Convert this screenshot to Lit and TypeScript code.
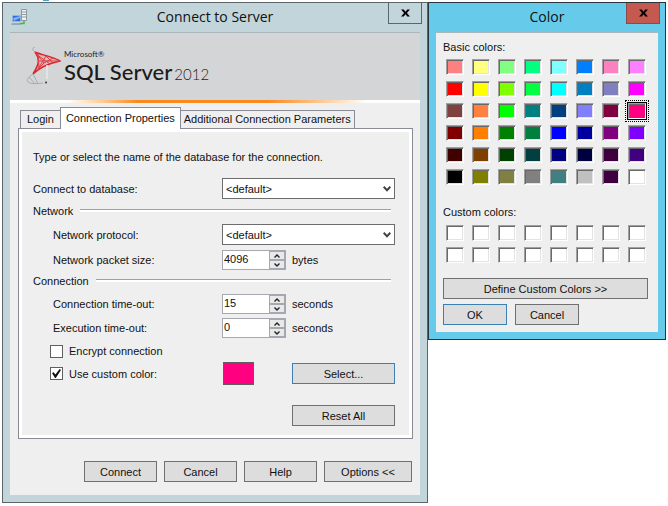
import { LitElement, html, css } from "lit";
import { customElement, property } from "lit/decorators.js";
import { classMap } from "lit/directives/class-map.js";

const controls = css`
  * { box-sizing: border-box; }
  button, input, select { font: inherit; color: inherit; margin: 0; }
  .btn {
    height: 21px;
    padding: 0;
    border: 1px solid #707070;
    border-radius: 0;
    background: #dddddd;
    text-align: center;
  }
  .btn.primary { border-color: #3c7fb1; }
`;

@customElement("dialog-window")
class DialogWindow extends LitElement {
  @property() heading = "";
  @property({ type: Boolean, reflect: true }) active = false;

  static styles = css`
    * { box-sizing: border-box; }
    :host {
      display: flex;
      flex-direction: column;
      box-sizing: border-box;
      border: 1px solid #5b6469;
      background: #c1d5db;
      padding: 0 7px 7px;
    }
    :host([active]) { border-color: #28343b; background: #66cbea; }
    .bar {
      display: grid;
      grid-template-columns: 1fr auto 1fr;
      height: 29px;
    }
    .icon { padding: 6px 0 0 1px; line-height: 0; }
    .title {
      margin: 0;
      font: 14px/28px "Open Sans", "Noto Sans", sans-serif;
      color: #111;
    }
    .close {
      justify-self: end;
      width: 34px;
      height: 21px;
      margin-right: -2px;
      padding: 0;
      border: 1px solid #5d6570;
      border-top: 0;
      background: transparent;
      line-height: 0;
    }
    :host([active]) .close { background: #c4594f; border-color: #8a4a4c; }
    .client {
      flex: 1;
      display: flex;
      flex-direction: column;
      background: #efefef;
      border-top: 1px solid #a9b6ba;
    }
  `;

  render() {
    return html`
      <header class="bar">
        <div class="icon"><slot name="icon"></slot></div>
        <h1 class="title">${this.heading}</h1>
        <button class="close" aria-label="Close">
          <svg width="9" height="8" viewBox="0 0 10 9"><path d="M0 .5h3l2 2.500 2-2.500h3L6.600 4.500 10 8.500H7L5 6 3 8.500H0l3.400-4z" fill="#000" /></svg>
        </button>
      </header>
      <div class="client"><slot></slot></div>
    `;
  }
}

@customElement("spin-box")
class SpinBox extends LitElement {
  @property() value = "";
  @property() label = "";

  static styles = [controls, css`
    :host { display: grid; grid-template-columns: 1fr 16px; width: 64px; height: 20px; box-sizing: border-box; border: 1px solid #a6a8b0; background: #fff; }
    .value { width: 100%; min-width: 0; height: 18px; padding: 0 0 2px 1px; border: 0; background: #fff; outline: 0; }
    .arrows { display: grid; grid-template-rows: 1fr 1fr; }
    .arrow { display: grid; place-items: center; padding: 0; border: 1px solid #a6a8b0; background: #e9e9ea; line-height: 0; }
  `];

  render() {
    return html`
      <input class="value" type="text" aria-label=${this.label} .value=${this.value} />
      <span class="arrows">
        <button class="arrow" aria-label="Increase"><svg width="6" height="4" viewBox="0 0 6 4"><path d="M.5 3.500L3 1l2.500 2.500" fill="none" stroke="#222" stroke-width="1.400" /></svg></button>
        <button class="arrow" aria-label="Decrease"><svg width="6" height="4" viewBox="0 0 6 4"><path d="M.5.500L3 3 5.500.500" fill="none" stroke="#222" stroke-width="1.400" /></svg></button>
      </span>
    `;
  }
}

@customElement("connect-form")
class ConnectForm extends LitElement {
  static styles = [controls, css`
    :host { display: block; color: #111; font: 11px/16px "Liberation Sans", Arial, sans-serif; }
    .banner {
      display: flex;
      align-items: flex-start;
      height: 67px;
      padding: 14px 0 0 16px;
      gap: 3px;
      background: #d4d5d7;
      color: #1c1c1e;
      font-family: Lato, "Open Sans", sans-serif;
    }
    .brand { display: grid; grid-template-columns: auto auto; column-gap: 2px; align-items: baseline; padding-top: 3px; }
    .maker { grid-column: 1 / -1; font-size: 8px; line-height: 9px; }
    .product { font-size: 22px; line-height: 26px; font-weight: 500; }
    .year { font-size: 15px; line-height: 26px; font-weight: 300; }
    .stripe { height: 3px; background: linear-gradient(90deg, #fff 14%, #ffc88c 23%, #fb8a1e 31%, #fb8a1e 63%, #fdc48c 75%, #fff 87%); }
    .body { padding: 4px 7px 13px 8px; }
    .tabs { display: flex; align-items: flex-end; padding-left: 2px; }
    .tab { height: 19px; margin: 0 -1px -1px 0; padding: 0 3px; border: 1px solid #898c95; background: #efefef; line-height: 17px; white-space: nowrap; }
    .tab.first { padding: 0 6px; }
    .tab.current { position: relative; height: 22px; padding: 0 5px; border-bottom: 0; background: #fff; }
    .panel { border: 1px solid #898c95; outline: 3px solid #fff; outline-offset: -4px; padding: 20px 17px 12px 14px; }
    .intro { margin: 0 0 13px; }
    .row { display: grid; grid-template-columns: 189px 70px 1fr; align-items: center; }
    .wide { grid-column: 2 / -1; }
    .sub { padding-left: 20px; }
    .rule { display: flex; align-items: center; gap: 7px; height: 16px; margin: 4px 4px 5px 0; font: inherit; }
    .rule::after { content: ""; flex: 1; height: 2px; margin-bottom: 1px; border-top: 1px solid #a0a0a0; background: #fff; }
    .tight { margin-top: 3px; }
    .gap5 { margin-top: 5px; }
    .gap4 { margin-top: 4px; }
    .combo { position: relative; height: 21px; }
    .select { width: 100%; height: 21px; padding: 0 3px; border: 1px solid #6d6d6d; border-radius: 0; background: #fff; appearance: none; }
    .chevron { position: absolute; right: 4px; top: 8px; pointer-events: none; }
    .check { display: flex; align-items: center; gap: 6px; padding-left: 17px; }
    .tick { appearance: none; display: grid; place-items: center; width: 13px; height: 13px; border: 1px solid #5f5f5f; background: #fff; }
    .tick:checked::before { content: ""; width: 9px; height: 9px; background: #111; clip-path: polygon(0 45%, 18% 35%, 38% 60%, 85% 0, 100% 12%, 42% 100%, 34% 100%); }
    .encrypt { margin: 5px 0 3px; }
    .chip { width: 31px; height: 23px; margin-left: 1px; border: 1px solid #5f5f5f; background: #ff0080; }
    .reset { grid-column: 3; }
    .last { margin-top: 20px; }
    .actions { display: flex; justify-content: flex-end; gap: 7px; margin: 22px 1px 0 0; }
    .act { width: 73px; }
    .act.long { width: 88px; }
  `];

  logo() {
    return html`
      <svg width="35" height="38" viewBox="0 0 35 38" fill="none">
        <path d="M9 5c6 3 17 4 25 9-9 2-20 6-27 13 5-8 8-14 2-22z" fill="#ea8a8c" fill-opacity=".4" />
        <path d="M9 5c6 3 17 4 25 9-9 2-20 6-27 13 5-8 8-14 2-22z" stroke="#d9262e" stroke-width="1.500" />
        <path d="M10 7l14 10M12 7l1 14M20 9l-8 13M20 9l7 7M12 14l22 0M13 21l5-5 9-5M9 5l9 11" stroke="#de4046" stroke-width="1" />
        <path d="M9 5C6 3 6 1 9 0M7 27c-5 3-7 6-5 8 2 2 9 2 15 1M3 30l6 7M7 27l5 10" stroke="#a2a7ab" stroke-width=".9" />
        <path d="M21 18v14" stroke="#e6e7e8" stroke-width="1.500" />
        <circle cx="20" cy="35.500" r="1" fill="#333" />
      </svg>`;
  }

  combo(id: string) {
    return html`<span class="combo wide">
      <select class="select" id=${id}><option>&lt;default&gt;</option></select>
      <svg class="chevron" width="8" height="6" viewBox="0 0 8 6"><path d="M.7.800L4 4.200 7.300.800" fill="none" stroke="#444" stroke-width="2" /></svg>
    </span>`;
  }

  spin(label: string, value: string, unit: string, gap: string) {
    return html`<div class="row ${gap}">
      <span class="sub">${label}</span>
      <spin-box .label=${label} .value=${value}></spin-box>
      <span>${unit}</span>
    </div>`;
  }

  render() {
    return html`
      <div class="banner">
        ${this.logo()}
        <div class="brand">
          <span class="maker">Microsoft®</span>
          <span class="product">SQL Server</span>
          <span class="year">2012</span>
        </div>
      </div>
      <div class="stripe"></div>
      <div class="body">
        <div class="tabs" role="tablist">
          <button class="tab first" role="tab">Login</button>
          <button class="tab current" role="tab" aria-selected="true">Connection Properties</button>
          <button class="tab" role="tab">Additional Connection Parameters</button>
        </div>
        <div class="panel" role="tabpanel">
          <p class="intro">Type or select the name of the database for the connection.</p>
          <div class="row"><label for="database">Connect to database:</label>${this.combo("database")}</div>
          <h2 class="rule">Network</h2>
          <div class="row"><label class="sub" for="protocol">Network protocol:</label>${this.combo("protocol")}</div>
          ${this.spin("Network packet size:", "4096", "bytes", "gap5")}
          <h2 class="rule tight">Connection</h2>
          ${this.spin("Connection time-out:", "15", "seconds", "")}
          ${this.spin("Execution time-out:", "0", "seconds", "gap4")}
          <label class="check encrypt"><input class="tick" type="checkbox" />Encrypt connection</label>
          <div class="row">
            <label class="check"><input class="tick" type="checkbox" checked />Use custom color:</label>
            <span class="chip"></span>
            <button class="btn primary">Select...</button>
          </div>
          <div class="row last"><button class="btn reset">Reset All</button></div>
        </div>
        <div class="actions">
          <button class="btn act">Connect</button>
          <button class="btn act">Cancel</button>
          <button class="btn act">Help</button>
          <button class="btn act long">Options &lt;&lt;</button>
        </div>
      </div>
    `;
  }
}

const BASIC = [
  "ff8080 ffff80 80ff80 00ff80 80ffff 0080ff ff80c0 ff80ff",
  "ff0000 ffff00 80ff00 00ff40 00ffff 0080c0 8080c0 ff00ff",
  "804040 ff8040 00ff00 008080 004080 8080ff 800040 ff0080",
  "800000 ff8000 008000 008040 0000ff 0000a0 800080 8000ff",
  "400000 804000 004000 004040 000080 000040 400040 400080",
  "000000 808000 808040 808080 408080 c0c0c0 400040 ffffff",
].join(" ").split(" ");

@customElement("color-picker")
class ColorPicker extends LitElement {
  static styles = [controls, css`
    :host { display: block; padding: 6px 10px 7px 7px; color: #111; font: 11px/16px "Liberation Sans", Arial, sans-serif; }
    .name { margin: 0; font: inherit; }
    .swatches { display: grid; grid-template-columns: repeat(8, 18px); gap: 6px 8px; padding: 4px 3px 19px; }
    .swatches.custom { padding: 5px 3px 15px; }
    .swatch { height: 16px; padding: 0; border: 1px solid; border-color: #a0a0a0 #fff #fff #a0a0a0; box-shadow: inset 1px 1px #696969, inset -1px -1px #e3e3e3; }
    .swatch.picked { box-shadow: inset 1px 1px #696969, 0 0 0 1px #000; outline: 1px dotted #000; outline-offset: 2px; }
    .define { width: 100%; }
    .answers { display: flex; gap: 8px; margin-top: 5px; }
    .answer { width: 64px; }
  `];

  swatch(color: string) {
    return html`<button class=${classMap({ swatch: true, picked: color === "ff0080" })} style="background:#${color}" aria-label="#${color}"></button>`;
  }

  render() {
    return html`
      <h2 class="name">Basic colors:</h2>
      <div class="swatches">${BASIC.map((c) => this.swatch(c))}</div>
      <h2 class="name">Custom colors:</h2>
      <div class="swatches custom">${Array.from({ length: 16 }, () => this.swatch("ffffff"))}</div>
      <button class="btn define">Define Custom Colors &gt;&gt;</button>
      <div class="answers">
        <button class="btn primary answer">OK</button>
        <button class="btn answer">Cancel</button>
      </div>
    `;
  }
}

@customElement("app-root")
class AppRoot extends LitElement {
  static styles = css`
    :host { display: block; background: linear-gradient(#4aa3c4, #4aa3c4) 43px 0 / 6px 1px no-repeat #fff; }
    .desk { display: grid; grid-template-columns: minmax(0, 426fr) minmax(0, 238fr); align-items: start; padding: 2px; }
  `;

  render() {
    return html`
      <main class="desk">
        <dialog-window heading="Connect to Server">
          <svg slot="icon" width="17" height="17" viewBox="0 0 17 17">
            <path d="M10.500.500h5v11h-5z" fill="#eef2f4" stroke="#8f9aa0" />
            <path d="M11 3h4M11 5.500h4M11 8h4" stroke="#8f9aa0" />
            <rect x="1.500" y="6.500" width="8" height="6" rx="1" fill="#2f6be0" stroke="#9fb2cf" />
            <path d="M2 9l7-2v2l-6 3z" fill="#7fb0ff" />
            <path d="M1 14h8l1 2H0z" fill="#9aa8b8" />
            <path d="M13 12v2.500H9" fill="none" stroke="#3fc12e" stroke-width="1.500" />
          </svg>
          <connect-form></connect-form>
        </dialog-window>
        <dialog-window heading="Color" active>
          <color-picker></color-picker>
        </dialog-window>
      </main>
    `;
  }
}
